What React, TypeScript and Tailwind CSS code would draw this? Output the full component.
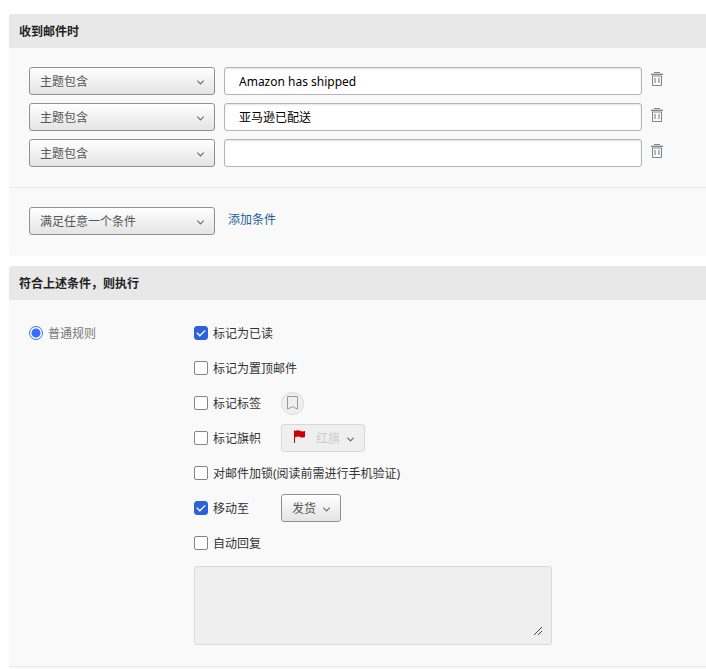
import { useState, type ReactNode } from 'react'

const fields = ['主题包含', '发件人包含', '收件人包含']

const initialConditions = [
  { id: 1, field: '主题包含', value: 'Amazon has shipped' },
  { id: 2, field: '主题包含', value: '亚马逊已配送' },
  { id: 3, field: '主题包含', value: '' },
]

function Chevron() {
  return (
    <svg
      className="absolute right-[10px] top-[12px] pointer-events-none"
      width="9"
      height="7"
      viewBox="0 0 9 7"
      fill="none"
      stroke="#666b73"
      strokeWidth="1.1"
    >
      <path d="M1.3 1.7 4.5 5 7.7 1.7" />
    </svg>
  )
}

function TrashIcon() {
  return (
    <svg width="12" height="14" viewBox="0 0 12 14" fill="none">
      <path d="M3 0.5h6" stroke="#80858a" />
      <path d="M0 1.5h12" stroke="#cfd1d3" />
      <path d="M0 2.5h12" stroke="#80858a" />
      <path d="M1 4h10" strokeWidth="2" stroke="#c0c3c6" />
      <path d="M1.5 4v9.5h9V4" stroke="#7f8489" />
      <path d="M4 6v5M8 6v5" stroke="#999da1" strokeWidth="1.4" />
    </svg>
  )
}

function Select({ label, options, className = '' }: { label: string; options: string[]; className?: string }) {
  return (
    <div className={`relative shrink-0 ${className}`}>
      <select
        aria-label={label}
        className="block w-full h-7 pt-[2px] pl-[10px] pr-6 appearance-none border border-[#909090] rounded-[3px] bg-linear-to-b from-white to-[#e4e4e4] text-[#555]"
      >
        {options.map((o) => (
          <option key={o}>{o}</option>
        ))}
      </select>
      <Chevron />
    </div>
  )
}

function Panel({ title, children }: { title: string; children: ReactNode }) {
  return (
    <section className="bg-[#f9f9f9] rounded-l-[3px] overflow-hidden">
      <h2 className="h-[34px] px-[10px] leading-[36px] bg-[#e8e8e8] font-bold text-[#222]">{title}</h2>
      {children}
    </section>
  )
}

function Action({ label, checked = false, children }: { label: string; checked?: boolean; children?: ReactNode }) {
  return (
    <div className="flex items-center h-[35px] pb-px">
      <label className="flex items-center gap-[5px]">
        <span className="relative block size-[14px]">
          <input
            type="checkbox"
            defaultChecked={checked}
            className="peer block size-[14px] appearance-none rounded-[2px] border border-[#858585] bg-white checked:rounded-[3px] checked:border-[#2d60db] checked:bg-[#2d60db]"
          />
          <svg
            className="absolute inset-0 hidden peer-checked:block pointer-events-none"
            width="14"
            height="14"
            viewBox="0 0 14 14"
            fill="none"
            stroke="#fff"
            strokeWidth="1.3"
          >
            <path d="M2.8 6.8 5.8 9.8 11.2 4.4" />
          </svg>
        </span>
        <span className={children ? 'pt-[2px] w-[68px]' : 'pt-[2px]'}>{label}</span>
      </label>
      {children}
    </div>
  )
}

export default function App() {
  const [conditions, setConditions] = useState(initialConditions)

  function addCondition() {
    setConditions([...conditions, { id: Date.now(), field: '主题包含', value: '' }])
  }

  function removeCondition(id: number) {
    setConditions(conditions.filter((c) => c.id !== id))
  }

  return (
    <main className="pl-[9px] pt-[14px] flex flex-col gap-[10px] bg-white text-[12px] leading-[18px] text-[#333] font-['Noto_Sans','Noto_Sans_CJK_SC',sans-serif]">
      <Panel title="收到邮件时">
        <div className="flex flex-col gap-2 pl-5 pr-[43px] pt-[19px] pb-5 border-b border-[#ebebeb]">
          {conditions.map((c) => (
            <div key={c.id} className="flex items-start gap-[9px]">
              <Select label="条件" options={fields} className="w-[186px]" />
              <input
                type="text"
                aria-label="条件内容"
                defaultValue={c.value}
                className="flex-1 min-w-0 h-7 px-[14px] border border-[#b4b4b4] rounded-[3px] bg-white text-black shadow-[inset_0_1px_2px_#e4e4e4]"
              />
              <button type="button" aria-label="删除" onClick={() => removeCondition(c.id)} className="pt-[5px]">
                <TrashIcon />
              </button>
            </div>
          ))}
        </div>
        <div className="flex items-start gap-[13px] px-5 pt-[19px] pb-[21px]">
          <Select label="匹配方式" options={['满足任意一个条件', '满足所有条件']} className="w-[186px]" />
          <a
            href="#add"
            onClick={(e) => {
              e.preventDefault()
              addCondition()
            }}
            className="pt-1 text-[#1a5f99]"
          >
            添加条件
          </a>
        </div>
      </Panel>

      <Panel title="符合上述条件，则执行">
        <div className="flex pl-5 pr-5 pt-4 pb-[21px] border-b border-[#ebebeb]">
          <div className="w-[165px] shrink-0">
            <label className="flex items-center gap-[5px] h-[35px] pb-px text-[#777]">
              <input
                type="radio"
                name="rule"
                defaultChecked
                className="size-[14px] appearance-none rounded-full border border-[#3370ff] bg-white checked:bg-[radial-gradient(circle,#3370ff_4px,#fff_5px)]"
              />
              <span className="pt-[2px]">普通规则</span>
            </label>
          </div>

          <div className="flex-1 min-w-0">
            <Action label="标记为已读" checked />
            <Action label="标记为置顶邮件" />
            <Action label="标记标签">
              <button
                type="button"
                aria-label="选择标签"
                disabled
                className="flex items-center justify-center size-[23px] rounded-full border border-[#dadada] bg-[#efefef]"
              >
                <svg width="11" height="14" viewBox="0 0 11 14" fill="none" stroke="#999" strokeWidth="1">
                  <path d="M0.5 0.5h10v12.6L5.5 10.6 0.5 13.1z" />
                </svg>
              </button>
            </Action>
            <Action label="标记旗帜">
              <div className="relative w-[84px]">
                <select
                  aria-label="旗帜颜色"
                  disabled
                  className="block w-full h-7 pt-[2px] pl-[34px] appearance-none border border-[#d8d8d8] rounded-[3px] bg-[#efefef] text-[#ccc] opacity-100"
                >
                  <option>红旗</option>
                </select>
                <svg className="absolute left-[13px] top-[6px] pointer-events-none" width="12" height="14" viewBox="0 0 12 14" fill="#c00">
                  <path d="M0 0.6h1V13H0z" />
                  <path d="M1 1C3 -0.2 4.6 0 6 0.8 7.6 1.7 9 1.6 11 1V7C9 7.8 7.4 7.8 6 7 4.6 6.2 3 6.4 1 7.2z" />
                </svg>
                <Chevron />
              </div>
            </Action>
            <Action label="对邮件加锁(阅读前需进行手机验证)" />
            <Action label="移动至" checked>
              <Select label="目标文件夹" options={['发货', '收件箱']} className="w-[60px]" />
            </Action>
            <Action label="自动回复" />

            <div className="relative mt-[5px] max-w-[358px]">
              <textarea
                aria-label="自动回复内容"
                disabled
                className="block w-full h-[79px] p-[9px] resize-none border border-[#dadada] rounded-[3px] bg-[#efefef]"
              />
              <svg
                className="absolute right-[10px] bottom-[10px] pointer-events-none"
                width="8"
                height="8"
                viewBox="0 0 8 8"
                stroke="#444"
                strokeWidth="1"
              >
                <path d="M0 8 8 0M4 8 8 4" />
              </svg>
            </div>
          </div>
        </div>
        <div className="h-5" />
      </Panel>
    </main>
  )
}
